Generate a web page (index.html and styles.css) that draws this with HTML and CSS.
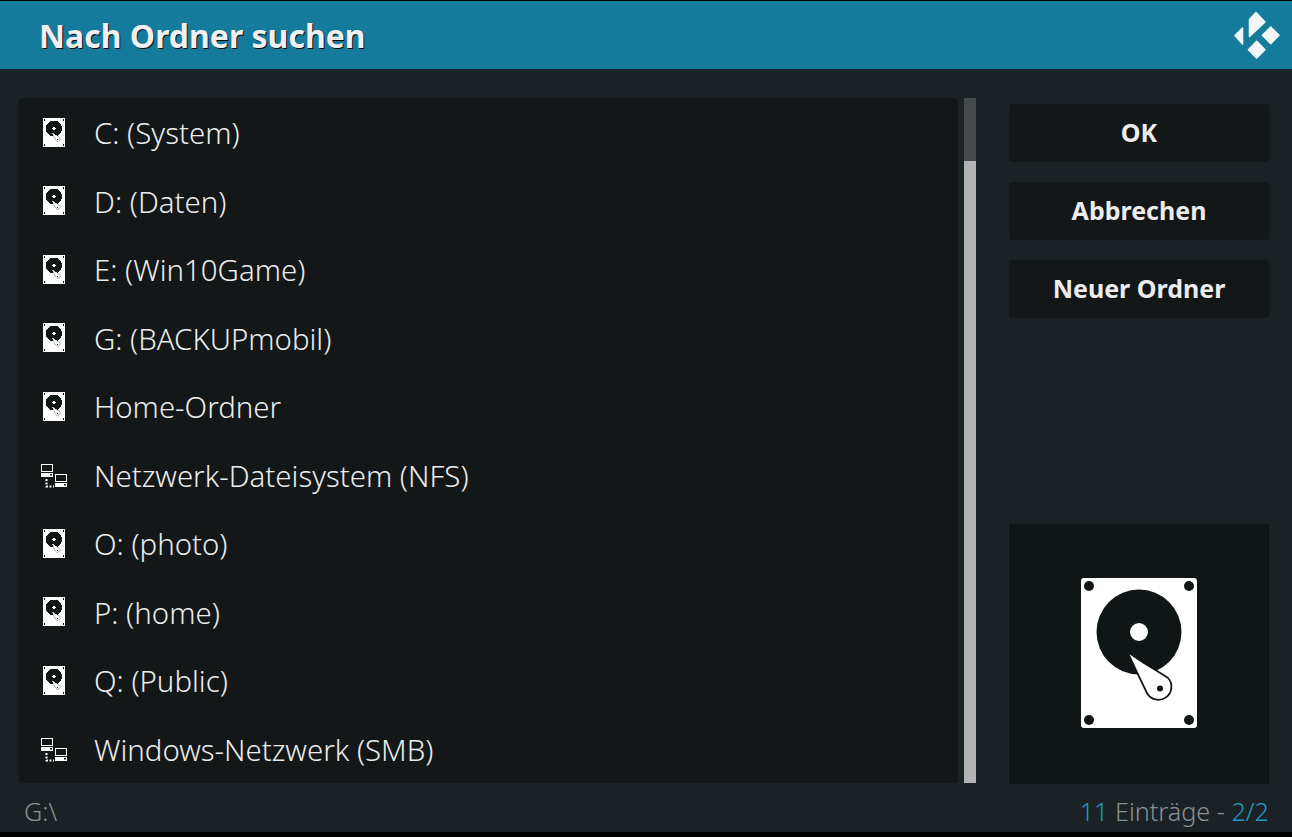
FILE: index.html
```html
<!DOCTYPE html>
<html>
<head>
    <title>Nach Ordner suchen</title>
    <link rel="stylesheet" href="styles.css">
</head>
<body>
    <svg class="defs" width="0" height="0">
        <symbol id="hdd" viewBox="0 0 116 150">
            <rect width="116" height="150" rx="3" fill="#fff"/>
            <g fill="#101516">
                <circle cx="8" cy="8" r="5"/>
                <circle cx="108" cy="8" r="5"/>
                <circle cx="8" cy="142" r="5"/>
                <circle cx="108" cy="142" r="5"/>
                <circle cx="58" cy="54" r="42.5"/>
            </g>
            <circle cx="58" cy="54" r="9" fill="#fff"/>
            <path d="M46 73 C58 83 72 90 87 100 A13 13 0 1 1 66 115 C60 103 54 90 46 73 Z" fill="#fff" stroke="#101516" stroke-width="1.8" stroke-linejoin="round"/>
            <circle cx="79" cy="110.5" r="3" fill="#101516"/>
        </symbol>
        <symbol id="net" viewBox="0 0 26 24">
            <rect x="0.5" y="0.5" width="11" height="7" fill="none" stroke="#fff"/>
            <rect x="0" y="9" width="12" height="4" fill="#fff"/>
            <rect x="14.5" y="10.5" width="11" height="7" fill="none" stroke="#fff"/>
            <rect x="14" y="19" width="12" height="4" fill="#fff"/>
            <rect x="9" y="10" width="2" height="1.5" fill="#121719"/>
            <rect x="23" y="20" width="2" height="1.5" fill="#121719"/>
            <path d="M5.5 15 V22.5 H13" fill="none" stroke="#fff" stroke-width="2" stroke-dasharray="2 1.5"/>
        </symbol>
    </svg>

    <div class="dialog">
        <header class="titlebar">
            <h1 class="title">Nach Ordner suchen</h1>
            <svg class="logo" viewBox="0 0 46 48">
                <g fill="#f1f6f8" stroke="#f1f6f8" stroke-width="1.5" stroke-linejoin="round">
                    <path d="M1 24.5 L8.5 17 V33 Z"/>
                    <path d="M15.5 8.5 L22 1.5 L31 11 L15.5 25.5 Z"/>
                    <path d="M36.7 16 L45 24.3 L36.7 32.6 L28.4 24.3 Z"/>
                    <path d="M22.7 30.4 L31 38.7 L22.7 47 L14.4 38.7 Z"/>
                </g>
            </svg>
        </header>

        <main class="content">
            <ul class="list">
                <li class="row"><svg class="row-icon hdd"><use href="#hdd"/></svg>C: (System)</li>
                <li class="row"><svg class="row-icon hdd"><use href="#hdd"/></svg>D: (Daten)</li>
                <li class="row"><svg class="row-icon hdd"><use href="#hdd"/></svg>E: (Win10Game)</li>
                <li class="row"><svg class="row-icon hdd"><use href="#hdd"/></svg>G: (BACKUPmobil)</li>
                <li class="row"><svg class="row-icon hdd"><use href="#hdd"/></svg>Home-Ordner</li>
                <li class="row"><svg class="row-icon net"><use href="#net"/></svg>Netzwerk-Dateisystem (NFS)</li>
                <li class="row"><svg class="row-icon hdd"><use href="#hdd"/></svg>O: (photo)</li>
                <li class="row"><svg class="row-icon hdd"><use href="#hdd"/></svg>P: (home)</li>
                <li class="row"><svg class="row-icon hdd"><use href="#hdd"/></svg>Q: (Public)</li>
                <li class="row"><svg class="row-icon net"><use href="#net"/></svg>Windows-Netzwerk (SMB)</li>
            </ul>

            <div class="scrollbar">
                <div class="scroll-track"></div>
                <div class="scroll-thumb"></div>
            </div>

            <aside class="side">
                <button class="btn" type="button">OK</button>
                <button class="btn" type="button">Abbrechen</button>
                <button class="btn" type="button">Neuer Ordner</button>
                <div class="preview">
                    <svg class="preview-icon"><use href="#hdd"/></svg>
                </div>
            </aside>
        </main>

        <footer class="footer">
            <span class="path">G:\</span>
            <span class="count"><span class="accent">11</span> Einträge - <span class="accent">2/2</span></span>
        </footer>
    </div>
</body>
</html>
```

FILE: styles.css
```css
* {
    box-sizing: border-box;
}
body {
    margin: 0;
    height: 837px;
    padding-top: 1px;
    overflow: hidden;
    background: #000;
    font-family: "Noto Sans", sans-serif;
    color: #e8e8e8;
}
.defs {
    position: absolute;
}
.dialog {
    height: 831px;
    display: flex;
    flex-direction: column;
    background: #1a2225;
}
.titlebar {
    height: 68px;
    flex: none;
    display: flex;
    align-items: center;
    justify-content: space-between;
    padding: 0 12px 0 39px;
    background: #157b9d;
}
.title {
    margin: 0;
    font-size: 32px;
    font-weight: 700;
    color: #f0f0f0;
    text-shadow: 1px 1px 0 #0a0a0a;
}
.logo {
    width: 46px;
    height: 48px;
    margin-top: -1px;
}
.content {
    height: 715px;
    flex: none;
    display: flex;
    padding: 29px 23px 0 19px;
}
.list {
    width: 939px;
    height: 685px;
    margin: 0;
    padding: 1px 0 0;
    list-style: none;
    background: #131718;
    border-radius: 4px;
}
.row {
    height: 68.5px;
    display: flex;
    align-items: center;
    font-size: 29.4px;
    font-weight: 300;
    color: #ececec;
}
.row-icon {
    flex: none;
}
.row-icon.hdd {
    width: 22px;
    height: 29px;
    margin: -2px 29px 0 24px;
    shape-rendering: crispEdges;
}
.row-icon.net {
    width: 26px;
    height: 24px;
    margin: 0 27px 0 22px;
}
.scrollbar {
    width: 12px;
    height: 685px;
    margin-left: 6px;
    display: flex;
    flex-direction: column;
}
.scroll-track {
    height: 63px;
    background: #45494c;
}
.scroll-thumb {
    flex: 1;
    background: #b3b3b3;
}
.side {
    width: 260px;
    height: 686px;
    margin-left: 33px;
    padding-top: 6px;
    display: flex;
    flex-direction: column;
    gap: 20px;
}
.btn {
    height: 58px;
    flex: none;
    border: none;
    border-radius: 4px;
    background: #131718;
    font-family: inherit;
    font-size: 25px;
    font-weight: 700;
    color: #ececec;
    padding: 0 0 2px;
}
.preview {
    width: 260px;
    height: 260px;
    margin-top: auto;
    display: flex;
    align-items: center;
    justify-content: center;
    background: #101516;
}
.preview-icon {
    width: 116px;
    height: 150px;
    margin-bottom: 3px;
}
.footer {
    flex: 1;
    display: flex;
    justify-content: space-between;
    align-items: center;
    padding: 5px 23px 0 24px;
    font-size: 25.2px;
    font-weight: 300;
    color: #8b9092;
}
.accent {
    color: #1a9bc4;
}
```
